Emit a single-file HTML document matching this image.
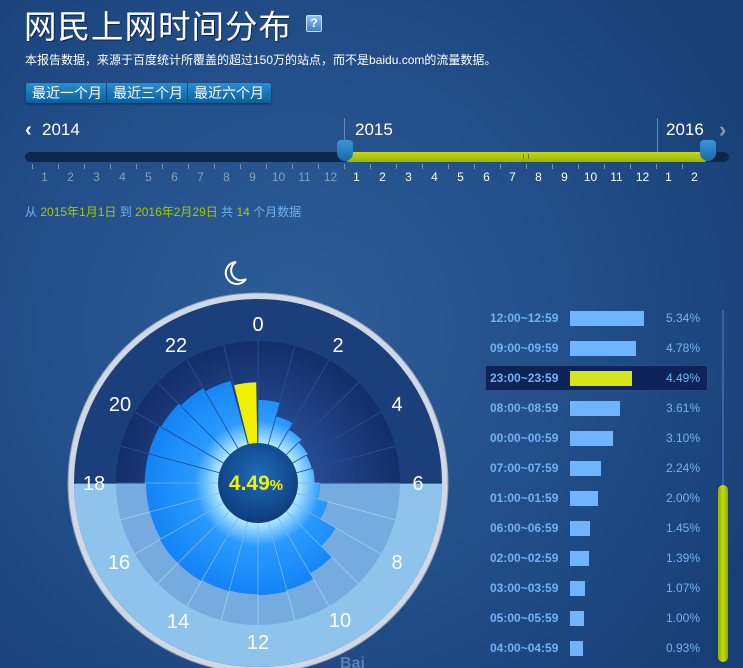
<!DOCTYPE html>
<html><head><meta charset="utf-8">
<style>
*{margin:0;padding:0;box-sizing:border-box}
body{width:743px;height:668px;overflow:hidden;position:relative;font-family:"Liberation Sans","Noto Sans CJK SC",sans-serif;
background:radial-gradient(ellipse 520px 520px at 300px 330px,#2d5d98 0%,#234f8a 50%,#173f75 100%);color:#fff}
.a{position:absolute;white-space:nowrap}
.title{left:24px;top:1px;font-size:32.5px;letter-spacing:1px;text-shadow:1px 1px 0 #0a2550}
.q{left:306px;top:15px;width:16px;height:17px;background:linear-gradient(#8ec0ee,#3f7fc6);border:1px solid #c8e0f8;border-radius:2px;font-size:12px;text-align:center;line-height:15px;font-weight:bold}
.sub{left:25px;top:51px;font-size:12px}
.btns{left:26px;top:83px;height:20px;width:245px;background:linear-gradient(#2a8ed0,#0b5f9e);border-radius:2px;box-shadow:0 1px 2px #0a2a55;font-size:14px;line-height:20px;display:flex}
.btns span{padding:0 4px 0 6px;border-right:1px solid #0a4a80}
.btns span:last-child{border:none}
.yr{font-size:17px;top:120px}
.mo{font-size:12px;top:170px;width:20px;text-align:center}
.lst{font-size:12px;font-weight:bold;color:#73b3f4}
.pc{font-size:12px;color:#73b3f4}
.bar{position:absolute;height:15px;background:#6fb4ff;left:570px}
</style></head><body>
<div class="a title">网民上网时间分布</div>
<div class="a q">?</div>
<div class="a sub">本报告数据，来源于百度统计所覆盖的超过150万的站点，而不是baidu.com的流量数据。</div>
<div class="a btns"><span>最近一个月</span><span>最近三个月</span><span>最近六个月</span></div>

<div class="a" style="left:25px;top:119px;font-size:20px;font-weight:bold">&#8249;</div>
<div class="a yr" style="left:42px">2014</div>
<div class="a yr" style="left:355px">2015</div>
<div class="a yr" style="left:666px">2016</div>
<div class="a" style="left:719px;top:117px;font-size:22px;font-weight:bold;color:#8a9bb0">&#8250;</div>
<div class="a" style="left:344px;top:118px;width:1px;height:34px;background:#6a8ab5"></div>
<div class="a" style="left:657px;top:118px;width:1px;height:34px;background:#6a8ab5"></div>
<div class="a" style="left:25px;top:152px;width:704px;height:10px;border-radius:5px;background:#0f2748"></div>
<div class="a" style="left:345px;top:152px;width:363px;height:10px;border-radius:4px;background:linear-gradient(#c2d81a,#98b400)"></div>
<div class="a" style="left:523px;top:154px;width:6px;height:5px;border-left:1px solid #6a7a10;border-right:1px solid #6a7a10"></div>
<div class="a" style="left:337px;top:140px;width:16px;height:21px;background:linear-gradient(#3b95d6,#1a6aa8);border-radius:4px 4px 8px 8px"></div>
<div class="a" style="left:700px;top:140px;width:16px;height:21px;background:linear-gradient(#3b95d6,#1a6aa8);border-radius:4px 4px 8px 8px"></div>
<div id="months"></div>
<div class="a" style="left:25px;top:203px;font-size:12px;color:#6fb0f0">从 <span style="color:#a8c800">2015年1月1日</span> 到 <span style="color:#a8c800">2016年2月29日</span> 共 <span style="color:#a8c800">14</span> 个月数据</div>

<svg class="a" style="left:0;top:0" width="743" height="668">
<defs>
<radialGradient id="wg" cx="258" cy="483" r="115" gradientUnits="userSpaceOnUse">
<stop offset="0.33" stop-color="#bff0ff"/><stop offset="0.55" stop-color="#2a9aff"/><stop offset="1" stop-color="#1282f5"/></radialGradient>
<radialGradient id="cg" cx="0.5" cy="0.4" r="0.6"><stop offset="0" stop-color="#1f6ab8"/><stop offset="1" stop-color="#0d3d7d"/></radialGradient>
<radialGradient id="ud" cx="258" cy="483" r="142" gradientUnits="userSpaceOnUse"><stop offset="0.3" stop-color="#2a4f9a"/><stop offset="1" stop-color="#132e68"/></radialGradient>
<clipPath id="top"><rect x="0" y="0" width="743" height="483"/></clipPath>
<clipPath id="bot"><rect x="0" y="483" width="743" height="200"/></clipPath>
</defs>
<circle cx="258" cy="483" r="184" fill="#1a3f7b" clip-path="url(#top)"/>
<circle cx="258" cy="483" r="184" fill="#8ec3ec" clip-path="url(#bot)"/>
<circle cx="258" cy="483" r="142" fill="url(#ud)" clip-path="url(#top)"/>
<circle cx="258" cy="483" r="142" fill="#76abdf" clip-path="url(#bot)"/>
<line x1="72" y1="483" x2="444" y2="483" stroke="#0e2a5a" stroke-width="1"/>
<g id="spokes"></g>
<g id="wedges"></g>
<circle cx="258" cy="483" r="187" fill="none" stroke="#cfd8e4" stroke-width="6"/>
<circle cx="258" cy="483" r="190" fill="none" stroke="#8a9ab5" stroke-width="1"/>
<circle cx="258" cy="483" r="40" fill="url(#cg)"/>
<text x="256" y="490" text-anchor="middle" font-family="Liberation Sans" font-weight="bold" font-size="21" fill="#f2f200">4.49<tspan font-size="15">%</tspan></text>
<g font-family="Liberation Sans" font-size="20" fill="#fff" text-anchor="middle">
<text x="258" y="331">0</text><text x="338" y="352">2</text><text x="397" y="411">4</text><text x="418" y="490">6</text>
<text x="397" y="569">8</text><text x="340" y="627">10</text><text x="258" y="649">12</text><text x="178" y="628">14</text>
<text x="119" y="569">16</text><text x="94" y="490">18</text><text x="120" y="411">20</text><text x="176" y="352">22</text></g>
<path d="M236 262 a11 11 0 1 0 10 17 a9 9 0 1 1 -10 -17z" fill="none" stroke="#fff" stroke-width="2"/>
<text x="340" y="668" font-family="Liberation Sans" font-size="16" fill="#5a80b8" font-weight="bold">Bai</text>
</svg>

<div class="a" style="left:485px;top:365px;width:223px;height:26px;background:#0e2459;border:1px solid #2c4a8a"></div>
<div id="list"></div>
<div class="a" style="left:722px;top:310px;width:2px;height:180px;background:#3a62a6"></div>
<div class="a" style="left:718px;top:485px;width:10px;height:177px;border-radius:5px;background:linear-gradient(90deg,#8fae00,#c4dc10,#8fae00)"></div>

<script>
var h='';
for(var i=0;i<26;i++){var x=44.5+i*26;var n=i<12?i+1:(i<24?i-11:i-23);var c=i<12?'#8aa0b8':'#fff';
h+='<div class="a mo" style="left:'+(x-10)+'px;color:'+c+'">'+n+'</div><div class="a" style="left:'+(x-13)+'px;top:164px;width:1px;height:5px;background:#7a93b5"></div>';}
document.getElementById('months').innerHTML=h;
var pct=[3.10,2.00,1.39,1.07,0.93,1.00,1.45,2.24,3.61,4.78,5.3,5.4,5.34,5.4,5.5,5.5,5.4,5.4,5.5,5.5,5.4,5.2,4.9,4.49];
var cx=258,cy=483,w='',s='';
function pt(r,a){a=(a-90)*Math.PI/180;return (cx+r*Math.cos(a)).toFixed(1)+' '+(cy+r*Math.sin(a)).toFixed(1);}
for(var k=0;k<24;k++){var r=44+12.6*pct[k];var a0=k*15,a1=k*15+15;
if(k==23){a0=346;a1=359;}
w+='<path d="M'+pt(38,a0)+' L'+pt(r,a0)+' A'+r+' '+r+' 0 0 1 '+pt(r,a1)+' L'+pt(38,a1)+'Z" fill="'+(k==23?'#f0f000':'url(#wg)')+'"/>';
var q1=pt(38,a0).split(' '),q2=pt(r,a0).split(' ');
w+='<line x1="'+q1[0]+'" y1="'+q1[1]+'" x2="'+q2[0]+'" y2="'+q2[1]+'" stroke="'+(a0>=90&&a0<=270?'#7fb6ea':'#1f4788')+'" stroke-width="0.8"/>';
var p1=pt(40,a0).split(' '),p2=pt(142,a0).split(' ');
s+='<line x1="'+p1[0]+'" y1="'+p1[1]+'" x2="'+p2[0]+'" y2="'+p2[1]+'" stroke="'+(a0>90&&a0<270?'#9cc8ee':'#2a4d8e')+'" stroke-width="1"/>';}
document.getElementById('wedges').innerHTML=w;document.getElementById('spokes').innerHTML=s;
var L=[['12:00~12:59',5.34],['09:00~09:59',4.78],['23:00~23:59',4.49],['08:00~08:59',3.61],['00:00~00:59',3.10],['07:00~07:59',2.24],['01:00~01:59',2.00],['06:00~06:59',1.45],['02:00~02:59',1.39],['03:00~03:59',1.07],['05:00~05:59',1.00],['04:00~04:59',0.93]];
var o='';for(var j=0;j<L.length;j++){var y=318+j*30;
o+='<div class="a lst" style="left:490px;top:'+(y-7)+'px">'+L[j][0]+'</div><div class="bar" style="top:'+(y-7)+'px;width:'+(L[j][1]*13.9)+'px'+(j==2?';background:#d4e61a':'')+'"></div><div class="a pc" style="left:666px;top:'+(y-7)+'px">'+L[j][1].toFixed(2)+'%</div>';}
document.getElementById('list').innerHTML=o;
</script>
</body></html>
